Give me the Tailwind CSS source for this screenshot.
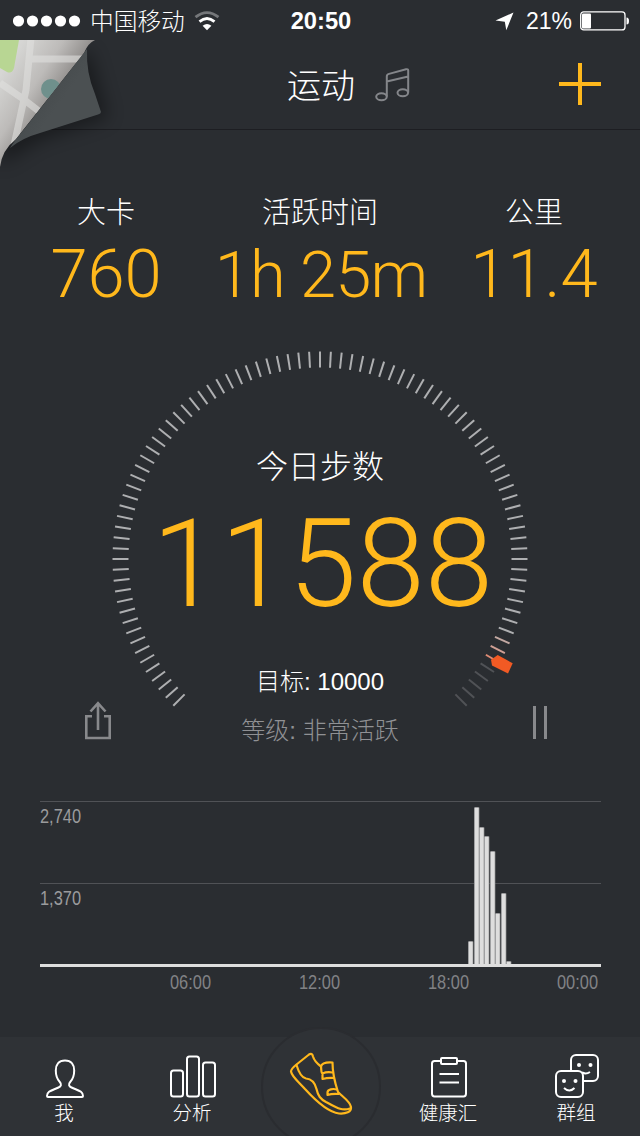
<!DOCTYPE html>
<html lang="zh-CN">
<head>
    <meta charset="UTF-8">
    <meta name="viewport" content="width=device-width, initial-scale=1.0">
    <title>运动</title>
    <script src="https://cdn.jsdelivr.net/npm/@tailwindcss/browser@4"></script>
    <style>
        body {
            font-family: 'Liberation Sans', 'Noto Sans CJK SC', sans-serif;
        }
        .number {
            font-family: Roboto, 'Liberation Sans', sans-serif;
            font-weight: 300;
            font-kerning: none;
        }
    </style>
</head>
<body class="bg-[#2a2d31] w-[640px] h-[1136px] overflow-hidden relative flex flex-col text-white">

    <!-- Status bar -->
    <div class="h-10 shrink-0 grid grid-cols-3 items-center pl-[13px] pr-[11px]">
        <div class="flex items-center">
            <svg class="w-[68px] h-3 shrink-0" viewBox="0 0 68 12" fill="#fff">
                <circle cx="5.5" cy="6" r="5.6"/><circle cx="19.5" cy="6" r="5.6"/><circle cx="33.5" cy="6" r="5.6"/><circle cx="47.5" cy="6" r="5.6"/><circle cx="61.5" cy="6" r="5.6"/>
            </svg>
            <span class="ml-[9px] pt-0.5 text-[23.7px] leading-10 font-light whitespace-nowrap">中国移动</span>
            <svg class="ml-[9px] w-[26px] h-5 shrink-0" viewBox="0 0 26 20" fill="none" stroke-width="2.8">
                <path d="M1.500 6.200Q13-3 24.500 6.200" stroke="#75777a"/>
                <path d="M5.500 10.600Q13 4.300 20.500 10.600" stroke="#fff"/>
                <path d="M13 19.300L8.600 14.800Q13 11 17.400 14.800Z" fill="#fff"/>
            </svg>
        </div>
        <div class="text-center text-[23.7px] font-bold leading-10">20:50</div>
        <div class="flex items-center justify-end">
            <svg class="w-[19px] h-[19px] mr-3" viewBox="0 0 19 19" fill="#fff"><path d="M18.500 0.500L11.300 18.300L9.800 9.800L0.500 8.500Z"/></svg>
            <span class="text-[23px] leading-10 mr-2">21%</span>
            <svg class="w-[49px] h-5" viewBox="0 0 49 20">
                <rect x=".7" y=".9" width="44.300" height="18" rx="3" fill="none" stroke="#fff" stroke-width="1.300"/>
                <rect x="2" y="2.500" width="9" height="15" rx="1" fill="#fff"/>
                <path d="M46.500 6.500Q49 6.500 49 10T46.500 13.500Z" fill="#fff"/>
            </svg>
        </div>
    </div>

    <!-- Header -->
    <div class="h-[90px] shrink-0 flex items-center justify-end border-b border-[#1d1e22] pr-[39px]">
        <h1 class="text-[34px] leading-[88px] pt-[3px] font-light">运动</h1>
        <svg class="ml-5 mt-[2px] w-9 h-9 mr-[148px]" viewBox="0 0 36 36" fill="none" stroke="#84868a" stroke-width="2">
            <ellipse cx="6.500" cy="28.800" rx="5.300" ry="3.500"/>
            <ellipse cx="27.800" cy="24.800" rx="5.300" ry="3.500"/>
            <path d="M11.800 28.500V8.500Q11.800 6.500 14 5.900L31 1.200Q33.200 0.800 33.200 2.500V24.500M11.800 13.500L33.200 8.500"/>
        </svg>
        <svg class="w-[42px] h-[42px] mt-[-1px]" viewBox="0 0 42 42" stroke="#ffb81c" stroke-width="4"><path d="M21 0V42M0 21H42"/></svg>
    </div>

    <!-- Page curl with the map under it -->
    <svg class="absolute left-0 top-10 w-[160px] h-[140px]" viewBox="0 40 160 140">
        <defs>
            <linearGradient id="paper" gradientUnits="userSpaceOnUse" x1="10" y1="60" x2="62" y2="94">
                <stop offset="0" stop-color="#d6d6d4"/><stop offset=".55" stop-color="#bdbbb9"/><stop offset="1" stop-color="#8d8a88"/>
            </linearGradient>
            <linearGradient id="fold" gradientUnits="userSpaceOnUse" x1="45" y1="92" x2="60" y2="103">
                <stop offset="0" stop-color="#414648"/><stop offset=".3" stop-color="#484d4f"/><stop offset="1" stop-color="#4b5052"/>
            </linearGradient>
            <filter id="soft" x="-50%" y="-50%" width="200%" height="200%"><feGaussianBlur stdDeviation="9"/></filter>
            <clipPath id="map"><path d="M0 40H95Q88 43 84 53L16 139Q2 150 0 167Z"/></clipPath>
        </defs>
        <path d="M90 52L108 118L40 140L0 165V140L84 50Z" fill="#000" opacity=".38" filter="url(#soft)"/>
        <g clip-path="url(#map)">
            <path d="M0 40H96V170H0Z" fill="url(#paper)"/>
            <path d="M0 40H19L14 68Q12 74 7 72L0 68Z" fill="#b8d693"/>
            <circle cx="51" cy="89" r="10" fill="#6f908c"/>
            <path d="M31 38L26 90L13 150M30 59H84M0 83L22 98L40 112" stroke="#e0e0dd" stroke-width="7" fill="none" opacity=".6"/>
        </g>
        <path d="M87 49Q86 73 95 94L101 112Q101 113.500 98 114.500L40 133Q22 138 10 148Q14 141 25 128Z" fill="url(#fold)"/>
    </svg>

    <!-- Summary numbers -->
    <div class="h-[190px] shrink-0 relative flex pt-[63px]">
        <div class="w-[212px] flex flex-col items-center">
            <div class="text-[29px] leading-10 font-light">大卡</div>
            <div class="number text-[67px] leading-[83px] tracking-[-0.2px] text-[#ffb81c]">760</div>
        </div>
        <div class="w-[216px] flex flex-col items-center">
            <div class="text-[29px] leading-10 font-light">活跃时间</div>
            <div class="number pl-0.5 text-[65px] leading-[84px] tracking-[-0.8px] text-[#ffb81c] whitespace-nowrap">1h 25m</div>
        </div>
        <div class="w-[212px] flex flex-col items-center">
            <div class="text-[29px] leading-10 font-light">公里</div>
            <div class="number text-[67px] leading-[83px] text-[#ffb81c]">11.4</div>
        </div>
    </div>

    <!-- Step gauge -->
    <div class="h-[440px] shrink-0 relative flex flex-col items-center">
        <svg class="absolute inset-0 w-[640px] h-[440px]" viewBox="0 320 640 440">
            <g id="ticks" stroke-width="2"></g>
            <path d="M512.700 663.300L508 673.400L492 665.500L491 659.800L497.700 655Z" fill="#f15a24"/>
        </svg>
        <div class="relative mt-[123px] text-[32px] leading-[48px] font-light">今日步数</div>
        <div class="relative number mt-px pl-[5px] text-[123px] leading-[144px] text-[#ffb81c]">11588</div>
        <div class="relative mt-[26px] text-[24px] leading-10 font-light">目标: 10000</div>
        <div class="relative mt-[9px] text-[24px] leading-10 font-light text-[#909194]">等级: 非常活跃</div>
        <svg class="absolute left-[84px] top-[380px] w-7 h-10" viewBox="0 0 28 40" fill="none" stroke="#88898c" stroke-width="2.600">
            <path d="M8 16.300H2.300V38H25.700V16.300H20M14 30V3M6.500 11.500L14 3.200L21.500 11.500"/>
        </svg>
        <svg class="absolute left-[532px] top-[386px] w-4 h-[33px]" viewBox="0 0 16 33" fill="#88898c">
            <path d="M1 0H4V33H1ZM12 0H15V33H12Z"/>
        </svg>
    </div>

    <!-- Steps per hour chart -->
    <svg class="w-[640px] h-[240px] shrink-0" viewBox="0 760 640 240" font-family="'Liberation Sans', sans-serif" font-size="20" fill="#818285">
        <path d="M40 801.500H601M40 883.500H601" stroke="#505256"/>
        <g id="bars"></g>
        <path d="M40 964H601V967H40Z" fill="#dedede"/>
        <text x="40" y="823" textLength="41" lengthAdjust="spacingAndGlyphs" fill="#9a9b9d">2,740</text>
        <text x="40" y="905" textLength="41" lengthAdjust="spacingAndGlyphs" fill="#9a9b9d">1,370</text>
        <text x="170" y="989" textLength="41" lengthAdjust="spacingAndGlyphs">06:00</text>
        <text x="299" y="989" textLength="41" lengthAdjust="spacingAndGlyphs">12:00</text>
        <text x="428" y="989" textLength="41" lengthAdjust="spacingAndGlyphs">18:00</text>
        <text x="557" y="989" textLength="41" lengthAdjust="spacingAndGlyphs">00:00</text>
    </svg>

    <!-- Tab bar -->
    <div class="mt-[37px] h-[99px] shrink-0 relative grid grid-cols-5 bg-[#2f3236] text-[19.5px] leading-7 font-light text-center">
        <div class="flex flex-col items-center pt-[15px]">
            <svg class="w-12 h-[46px]" viewBox="0 0 48 46" fill="none" stroke="#fff" stroke-width="2" stroke-linejoin="round">
                <path d="M25 8C18.500 8 15.800 12.500 15.800 18C15.800 23 17 26.500 19.800 29.500C22 32 21 34 18.500 35C12 38 7 38.500 7 43.500Q7 44.500 8 44.500H42Q43 44.500 43 43.500C43 38.500 38 38 31.500 35C29 34 28 32 30.200 29.500C33 26.500 34.200 23 34.200 18C34.200 12.500 31.500 8 25 8Z" transform="translate(0 .5)"/>
            </svg>
            <span class="mt-px">我</span>
        </div>
        <div class="flex flex-col items-center pt-[15px]">
            <svg class="w-12 h-[46px]" viewBox="0 0 48 46" fill="none" stroke="#fff" stroke-width="2">
                <rect x="3" y="18.500" width="12" height="26" rx="2.500"/>
                <rect x="19" y="4.500" width="12" height="40" rx="2.500"/>
                <rect x="35" y="10.500" width="12" height="34" rx="2.500"/>
            </svg>
            <span class="mt-px">分析</span>
        </div>
        <div class="relative">
            <svg class="absolute left-0 top-[-13px] w-32 h-28" viewBox="256 1024 128 112" fill="none" stroke="#ffb81c" stroke-width="2.200" stroke-linejoin="round" stroke-linecap="round">
                <circle cx="321" cy="1087" r="59" fill="#2f3236" stroke="#2a2c30" stroke-width="2"/>
                <path d="M309 1054.500C311 1053 312.500 1054 313 1056.500C314 1060 317 1063.500 321 1066.500C322 1063 326 1062 332.500 1062.500C332.500 1072 336 1086 338 1092C342 1096.500 350 1101 351 1107C351.500 1112 346 1114 339 1113.500C327 1112 315 1100 305 1089C299 1082 292 1077 291 1071.500C291 1069 294 1066.500 296.500 1064.500Z"/>
                <path d="M296.500 1065C298 1070 301 1077.500 306 1078.500C312 1079 315 1083 316.500 1089C318 1096 320.500 1099 326 1102C335 1106.500 341 1111.500 350 1108.500M321 1066.500C321.500 1070.500 321 1073 322.500 1073.500Q327 1071.500 332.500 1072.500M322.500 1073.500V1079Q328 1077.500 334 1078M337 1089.500C333 1088.500 327.500 1089 327.500 1092.500V1095Q332 1093.500 338.500 1094"/>
            </svg>
        </div>
        <div class="flex flex-col items-center pt-[15px]">
            <svg class="w-12 h-[46px]" viewBox="0 0 48 46" fill="none" stroke="#fff" stroke-width="2">
                <path d="M16 9H10.500Q8 9 8 11.500V41.500Q8 44.500 10.500 44.500H39.500Q42 44.500 42 41.500V11.500Q42 9 39.500 9H34"/>
                <rect x="17" y="6" width="16" height="6" rx="1"/>
                <path d="M15.500 22H35M15.500 30.500H35"/>
            </svg>
            <span class="mt-px">健康汇</span>
        </div>
        <div class="flex flex-col items-center pt-[15px]">
            <svg class="w-12 h-[46px]" viewBox="0 0 48 46" fill="none" stroke="#fff" stroke-width="2">
                <rect x="19" y="3" width="27" height="26" rx="5"/>
                <path d="M30 20.500Q34 22.500 38 20"/>
                <circle cx="27" cy="13" r="2" fill="#fff" stroke="none"/><circle cx="38.500" cy="13" r="2" fill="#fff" stroke="none"/>
                <rect x="4" y="19" width="27" height="26" rx="5" fill="#2f3236"/>
                <path d="M12 36Q17.500 41 22.500 36"/>
                <circle cx="12" cy="29" r="2" fill="#fff" stroke="none"/><circle cx="23.500" cy="29" r="2" fill="#fff" stroke="none"/>
            </svg>
            <span class="mt-px">群组</span>
        </div>
    </div>

    <script>
        const NS = 'http://www.w3.org/2000/svg';

        function add(parent, name, attrs) {
            const el = document.createElementNS(NS, name);
            for (const key in attrs) el.setAttribute(key, attrs[key]);
            parent.appendChild(el);
        }

        // 91 ticks over 270 degrees, the last ones are not reached yet
        const ticks = document.getElementById('ticks');
        for (let i = 0; i <= 90; i++) {
            const a = (135 + i * 3) * Math.PI / 180;
            let color = '#aeafb1';
            if (i === 83) color = '#c2a8a2';
            if (i === 84) color = '#cf9f94';
            if (i === 85) color = '#df8c75';
            if (i > 85) color = '#505256';
            add(ticks, 'line', {
                x1: 320 + 191.5 * Math.cos(a), y1: 559 + 191.5 * Math.sin(a),
                x2: 320 + 207.5 * Math.cos(a), y2: 559 + 207.5 * Math.sin(a),
                stroke: color
            });
        }

        // [x, top] of each bar
        const bars = [[468, 941.5], [474, 807.5], [479, 827.5], [484, 836.5], [490, 851.5], [495, 913.5], [501, 893.5], [506, 961.5]];
        bars.forEach(([x, y]) => {
            add(document.getElementById('bars'), 'rect', { x: x, y: y, width: 5.4, height: 965 - y, fill: '#858688' });
            add(document.getElementById('bars'), 'rect', { x: x + 0.7, y: y, width: 4, height: 965 - y, fill: '#dedede' });
        });
    </script>

</body>
</html>
